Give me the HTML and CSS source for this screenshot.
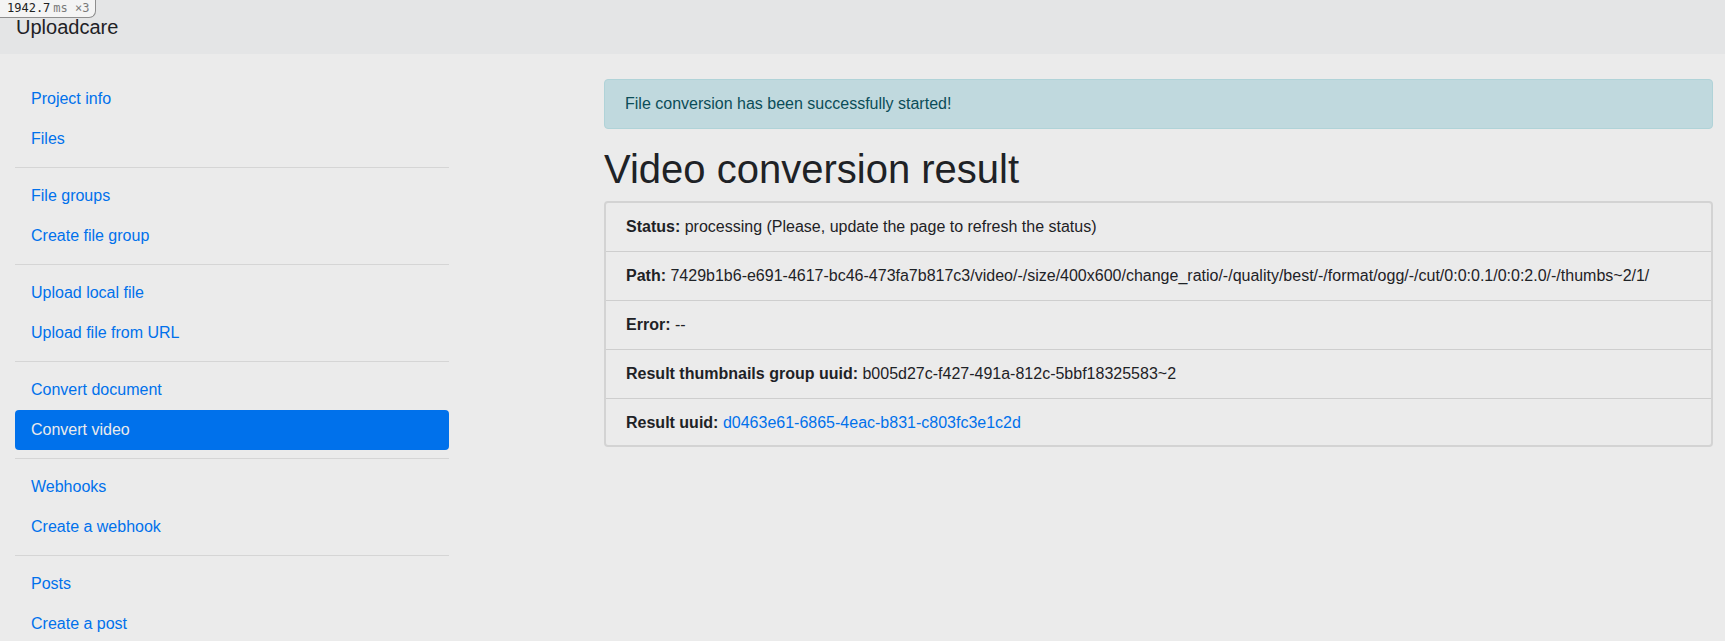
FILE: index.html
```html
<!DOCTYPE html>
<html lang="en">
<head>
<meta charset="utf-8">
<title>Video conversion result</title>
<link rel="stylesheet" href="styles.css">
</head>
<body>
<div class="perf-badge"><span class="perf-num">1942.7</span><span class="perf-unit">ms ×3</span></div>
<header class="navbar">
  <a class="brand" href="#">Uploadcare</a>
</header>
<div class="layout">
  <nav class="sidebar">
    <a class="nav-link" href="#">Project info</a>
    <a class="nav-link" href="#">Files</a>
    <hr class="sep">
    <a class="nav-link" href="#">File groups</a>
    <a class="nav-link" href="#">Create file group</a>
    <hr class="sep">
    <a class="nav-link" href="#">Upload local file</a>
    <a class="nav-link" href="#">Upload file from URL</a>
    <hr class="sep">
    <a class="nav-link" href="#">Convert document</a>
    <a class="nav-link active" href="#">Convert video</a>
    <hr class="sep">
    <a class="nav-link" href="#">Webhooks</a>
    <a class="nav-link" href="#">Create a webhook</a>
    <hr class="sep">
    <a class="nav-link" href="#">Posts</a>
    <a class="nav-link" href="#">Create a post</a>
  </nav>
  <main class="content">
    <div class="alert">File conversion has been successfully started!</div>
    <h1 class="title">Video conversion result</h1>
    <ul class="card">
      <li class="row"><b>Status:</b> processing (Please, update the page to refresh the status)</li>
      <li class="row"><b>Path:</b> 7429b1b6-e691-4617-bc46-473fa7b817c3/video/-/size/400x600/change_ratio/-/quality/best/-/format/ogg/-/cut/0:0:0.1/0:0:2.0/-/thumbs~2/1/</li>
      <li class="row"><b>Error:</b> --</li>
      <li class="row"><b>Result thumbnails group uuid:</b> b005d27c-f427-491a-812c-5bbf18325583~2</li>
      <li class="row"><b>Result uuid:</b> <a class="link" href="#">d0463e61-6865-4eac-b831-c803fc3e1c2d</a></li>
    </ul>
  </main>
</div>
</body>
</html>
```
FILE: styles.css
```css
* { box-sizing: border-box; }

html, body {
  margin: 0;
  padding: 0;
}

body {
  background: #ebebeb;
  color: #1e2226;
  font-family: "Liberation Sans", Arial, Helvetica, sans-serif;
  font-size: 16px;
  line-height: 24px;
  height: 641px;
  overflow: hidden;
}

.perf-badge {
  position: absolute;
  top: 0;
  left: 0;
  height: 18px;
  width: 96px;
  padding: 0 0 0 7px;
  background: #f4f4f4;
  border: 1px solid #8e8e8e;
  border-top: none;
  border-left: none;
  border-bottom-right-radius: 7px;
  font-family: "DejaVu Sans Mono", "Liberation Mono", monospace;
  font-size: 12px;
  line-height: 17px;
  color: #222;
  z-index: 10;
  white-space: nowrap;
}

.perf-unit {
  color: #7a7a7a;
  font-size: 12px;
  margin-left: 3px;
}

.navbar {
  background: #e4e5e6;
  height: 54px;
  padding: 7px 16px;
  display: flex;
  align-items: center;
}

.brand {
  color: #1e2226;
  text-decoration: none;
  font-size: 20px;
  line-height: 30px;
  padding: 5px 0;
}

.layout {
  display: grid;
  grid-template-columns: 434px 1fr;
  column-gap: 155px;
  padding: 25px 12px 0 15px;
}

.sidebar {
  display: flex;
  flex-direction: column;
}

.nav-link {
  display: block;
  padding: 8px 16px;
  color: #0071eb;
  text-decoration: none;
  border-radius: 4px;
}

.nav-link.active {
  background: #0071eb;
  color: #ebebeb;
}

.sep {
  margin: 8px 0;
  border: 0;
  border-top: 1px solid #d5d5d5;
  height: 0;
}

.content {
  min-width: 0;
}

.alert {
  background: #c0d9de;
  border: 1px solid #b0d3d8;
  color: #0b4d58;
  border-radius: 4px;
  padding: 12px 20px;
  margin-bottom: 16px;
}

.title {
  font-size: 40px;
  font-weight: normal;
  line-height: 48px;
  margin: 0 0 8px;
  color: #1e2226;
}

.card {
  list-style: none;
  margin: 0;
  padding: 0;
  border: 2px solid #d3d3d3;
  border-radius: 4px;
}

.row {
  padding: 12px 20px;
  border-top: 1px solid #cecece;
  white-space: nowrap;
}

.row:first-child {
  border-top: none;
}

.row:last-child {
  padding-bottom: 10px;
}

.row b {
  font-weight: bold;
}

.link {
  color: #0071eb;
  text-decoration: none;
}
```
